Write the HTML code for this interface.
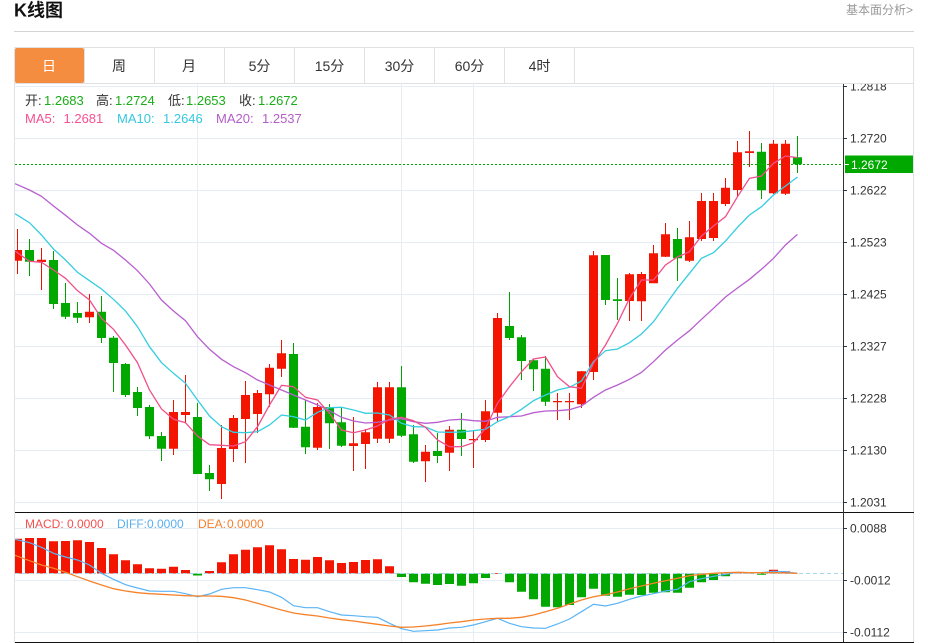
<!DOCTYPE html>
<html lang="zh">
<head>
<meta charset="utf-8">
<title>K线图</title>
<style>
html,body{margin:0;padding:0;background:#fff;width:928px;height:643px;overflow:hidden}
svg{display:block;font-family:"Liberation Sans","Noto Sans CJK SC",sans-serif}
</style>
</head>
<body>
<svg width="928" height="643" viewBox="0 0 928 643" xmlns="http://www.w3.org/2000/svg">
<defs><clipPath id="c"><rect x="15" y="84" width="828" height="558"/></clipPath>
<clipPath id="a"><rect x="843" y="84" width="70" height="558"/></clipPath></defs>

<!-- header -->
<text x="14" y="16.5" font-size="18" font-weight="700" fill="#111">K线图</text>
<text x="846" y="14" font-size="12" fill="#999">基本面分析&gt;</text>
<path d="M14 31.5H914" stroke="#d2d4d6" fill="none"/>

<!-- frame + tabs -->
<path d="M14.5 47V643M913.5 47V643M14 47.5H914M14 83.5H914" stroke="#dfe1e4" fill="none"/>
<path d="M84.5 48V83M154.5 48V83M224.5 48V83M294.5 48V83M364.5 48V83M434.5 48V83M504.5 48V83M574.5 48V83" stroke="#dfe1e4" fill="none"/>
<rect x="15" y="48" width="69" height="35" rx="2" fill="#f58d40"/>
<g font-size="14" fill="#333" text-anchor="middle">
<text x="49" y="71" fill="#fff">日</text>
<text x="119" y="71">周</text>
<text x="189" y="71">月</text>
<text x="259.500" y="71">5分</text>
<text x="329.500" y="71">15分</text>
<text x="399.500" y="71">30分</text>
<text x="469.500" y="71">60分</text>
<text x="539.500" y="71">4时</text>
</g>

<!-- grid -->
<g stroke="#e6edf4" fill="none">
<path d="M15 86.5H843M15 138.500H843M15 190.500H843M15 242.500H843M15 294.500H843M15 346.500H843M15 398.500H843M15 450.500H843M15 502.500H843M15 528.500H843M15 580.500H843M15 632.500H843"/>
<path d="M197.500 84V642M401.500 84V642M473.500 84V642M773.500 84V642"/>
</g>

<g clip-path="url(#c)" fill="none">
<!-- price line -->
<path d="M15 164.500H843" stroke="#00a800" stroke-dasharray="2 2"/>
<!-- wicks -->
<path stroke="#ee1000" stroke-width="1" d="M17.500 229V274M41.500 248V290M89.500 294V323M173.500 400V455M185.500 375V423M221.500 425V499M233.500 415V462M245.500 381V463M257.500 390V433M269.500 364V407M281.500 340V377M317.500 403V450M353.500 417V471M365.500 429V469M377.500 382V443M389.500 382V443M425.500 445V482M449.500 426V471M473.500 431V468M485.500 400V442M497.500 313V421M557.500 393V420M569.500 393V420M581.500 371V408M593.500 251V380M629.500 273V321M641.500 272V321M653.500 245V283M665.500 223V257M689.500 221V262M701.500 193V241M713.500 193V241M725.500 178V206M737.500 141V197M749.500 131V167M773.500 140V194M785.500 140V195"/>
<path stroke="#00a000" stroke-width="1" d="M29.500 239V276M53.500 251V309M65.500 283V319M77.500 302V323M101.500 296V343M113.500 336V392M125.500 363V397M137.500 387V416M149.500 405V439M161.500 432V461M197.500 403V474M209.500 465V491M293.500 343V428M305.500 400V454M329.500 404V449M341.500 408V447M401.500 366V437M413.500 425V463M437.500 433V463M461.500 413V456M509.500 292V340M521.500 335V380M533.500 359V391M545.500 356V406M605.500 255V305M617.500 278V320M677.500 228V281M761.500 143V199M797.500 136V173"/>
<!-- bodies -->
<path stroke="#f41500" stroke-width="9" d="M17.500 250V260.700M41.500 259.700V262M89.500 311.700V317.300M173.500 412V448.700M185.500 412V415M221.500 448V484M233.500 418V449M245.500 395V419M257.500 393V414M269.500 367.700V394.300M281.500 353.300V368.700M317.500 407V447.700M353.500 443.300V446M365.500 432.300V444M377.500 387.300V438.700M389.500 387.300V438.700M425.500 451.700V461.300M449.500 429.700V452.700M473.500 439V440.300M485.500 411.300V440M497.500 318V412.700M557.500 401V402.300M569.500 401V402.300M581.500 371.300V404.300M593.500 255.300V372M629.500 274.300V301M641.500 274V301.300M653.500 253.300V283.300M665.500 234.300V256.700M689.500 237.300V260.700M701.500 201V239M713.500 201V238M725.500 187.700V204M737.500 152.300V190M749.500 151.300V153M773.500 143.700V193.300M785.500 143.700V193.700"/>
<path stroke="#00a800" stroke-width="9" d="M29.500 250V261.700M53.500 260V304M65.500 303V316.700M77.500 313V317.700M101.500 311.700V338M113.500 337.700V363M125.500 364V395M137.500 392V408M149.500 407V436.300M161.500 436V448.700M197.500 417V474M209.500 473V479.300M293.500 354V427.700M305.500 426.700V447.300M329.500 407.300V423.300M341.500 422.300V445.700M401.500 387.300V435.700M413.500 434.300V461.700M437.500 451V456M461.500 429.700V439M509.500 326V338M521.500 337.300V361M533.500 360.300V369.300M545.500 368.700V401.700M605.500 255V300M617.500 299.300V301M677.500 239V258.300M761.500 151.700V190.300M797.500 157.300V164.300"/>
<!-- MA20 -->
<polyline stroke="#b85fcf" stroke-width="1.300" points="15,183.700 29.500,190 41.500,196.300 53.500,206 65.500,215.300 77.500,225 89.500,233.300 101.500,243.300 113.500,250.300 125.500,260 137.500,270.700 149.500,284 161.500,300 173.500,311 185.500,320.700 197.500,336.700 209.500,349.300 221.500,359.300 233.500,366.700 245.500,372.700 257.500,380 269.500,385 281.500,390 293.500,395 305.500,400 317.500,405 329.500,410.700 341.500,417.300 353.500,421 365.500,423 377.500,422.300 389.500,420 401.500,418.700 413.500,421.700 425.500,423.300 437.500,422.300 449.500,420 461.500,419.300 473.500,420.700 485.500,421.300 497.500,417.300 509.500,416.700 521.500,416 533.500,412.700 545.500,411 557.500,410.700 569.500,409.700 581.500,406 593.500,397.300 605.500,390 617.500,385 629.500,379.300 641.500,372.300 653.500,361.700 665.500,350 677.500,340 689.500,330.700 701.500,319.300 713.500,308.300 725.500,297 737.500,288 749.500,279.300 761.500,269.300 773.500,258.300 785.500,245 797.500,234.300"/>
<!-- MA10 -->
<polyline stroke="#35cde0" stroke-width="1.300" points="15,213.700 29.500,222.700 41.500,235 53.500,249 65.500,260 77.500,272.300 89.500,280.700 101.500,289 113.500,299.300 125.500,311 137.500,326.700 149.500,346.700 161.500,362.700 173.500,373.300 185.500,383.300 197.500,400 209.500,416 221.500,426.700 233.500,432.300 245.500,432.700 257.500,431.700 269.500,425 281.500,415 293.500,416.700 305.500,420 317.500,412.300 329.500,407.700 341.500,407.300 353.500,410 365.500,413.300 377.500,413 389.500,415 401.500,423.300 413.500,426.700 425.500,427 437.500,432 449.500,432.300 461.500,432 473.500,430.700 485.500,429.300 497.500,421.700 509.500,416.700 521.500,409.300 533.500,400.700 545.500,395 557.500,390 569.500,387.300 581.500,381 593.500,361.700 605.500,350.700 617.500,349 629.500,342.700 641.500,334 653.500,321.700 665.500,305 677.500,288.300 689.500,273.300 701.500,258.300 713.500,252.700 725.500,241 737.500,227.300 749.500,215 761.500,206.700 773.500,195 785.500,186 797.500,177"/>
<!-- MA5 -->
<polyline stroke="#f0508c" stroke-width="1.300" points="15,251 29.500,261.300 41.500,262.300 53.500,270 65.500,278.300 77.500,290.700 89.500,300 101.500,318.300 113.500,329.300 125.500,345 137.500,362.700 149.500,390 161.500,409 173.500,419.300 185.500,422.700 197.500,436 209.500,444.700 221.500,445.300 233.500,446 245.500,441.700 257.500,426.700 269.500,405 281.500,385.300 293.500,386.700 305.500,397.300 317.500,400 329.500,413.300 341.500,430 353.500,432.700 365.500,430 377.500,426 389.500,419.300 401.500,417.300 413.500,420.700 425.500,427.300 437.500,440 449.500,446.700 461.500,446.700 473.500,442.700 485.500,428.300 497.500,403.300 509.500,386.700 521.500,371.700 533.500,359 545.500,357 557.500,376.700 569.500,386.700 581.500,388.300 593.500,363.300 605.500,345 617.500,323.300 629.500,298.300 641.500,280 653.500,280 665.500,265 677.500,257 689.500,251.700 701.500,236 713.500,226 725.500,216.700 737.500,196.700 749.500,178.300 761.500,176 773.500,163.300 785.500,156 797.500,157.700"/>

<!-- MACD bars -->
<path stroke="#f41500" stroke-width="9" d="M17.500 538.700V573.500M29.500 538V573.500M41.500 538V573.500M53.500 541.300V573.500M65.500 541V573.500M77.500 540.300V573.500M89.500 542V573.500M101.500 548V573.500M113.500 554.300V573.500M125.500 560.300V573.500M137.500 564.300V573.500M149.500 568.300V573.500M161.500 568.700V573.500M173.500 566.700V573.500M185.500 570V573.500M209.500 571V573.500M221.500 562.300V573.500M233.500 554.300V573.500M245.500 549.700V573.500M257.500 547.300V573.500M269.500 545.300V573.500M281.500 549.300V573.500M293.500 559V573.500M305.500 559.700V573.500M317.500 557V573.500M329.500 560.300V573.500M341.500 563V573.500M353.500 562V573.500M365.500 560V573.500M377.500 559.300V573.500M389.500 566.300V573.500M497.500 573V573.800M737.500 572.500V573.500M749.500 573V573.500M773.500 569.700V573.500M785.500 571.300V573.500"/>
<path stroke="#00a800" stroke-width="9" d="M197.500 573.500V575.500M401.500 573.500V577M413.500 573.500V582.300M425.500 573.500V583.700M437.500 573.500V585M449.500 573.500V584M461.500 573.500V585.700M473.500 573.500V583.300M485.500 573.500V578M509.500 573.500V582.300M521.500 573.500V591.700M533.500 573.500V599.300M545.500 573.500V606.700M557.500 573.500V607.300M569.500 573.500V605M581.500 573.500V597.300M593.500 573.500V588.700M605.500 573.500V595.700M617.500 573.500V596.700M629.500 573.500V594.700M641.500 573.500V595M653.500 573.500V592.700M665.500 573.500V592.300M677.500 573.500V592.700M689.500 573.500V587.700M701.500 573.500V582.300M713.500 573.500V580M725.500 573.500V576.300M761.500 573.500V574.700"/>
<path d="M15 573.500H843" stroke="#a5d8ea" stroke-dasharray="4 3"/>
<!-- DIFF -->
<polyline stroke="#5ab4f5" stroke-width="1.200" points="15,539.300 29.500,542.700 41.500,547.300 53.500,553.300 65.500,557 77.500,560 89.500,565 101.500,573.300 113.500,579.300 125.500,584.700 137.500,588 149.500,591 161.500,591.300 173.500,591.300 185.500,593.700 197.500,596.700 209.500,594 221.500,589.300 233.500,587.700 245.500,587.700 257.500,589.700 269.500,592 281.500,597.300 293.500,605.700 305.500,607.700 317.500,607.700 329.500,611.700 341.500,615 353.500,615.700 365.500,616.700 377.500,617.300 389.500,623.300 401.500,628.700 413.500,631.300 425.500,630.700 437.500,630 449.500,628 461.500,627.300 473.500,625 485.500,621.700 497.500,618.300 509.500,623.300 521.500,626.700 533.500,628 545.500,628.300 557.500,624 569.500,619 581.500,611.700 593.500,604.300 605.500,606 617.500,603.300 629.500,599.300 641.500,596 653.500,593.700 665.500,591 677.500,589.300 689.500,581.700 701.500,578.700 713.500,576.300 725.500,574.300 737.500,572.300 749.500,572.700 761.500,572.700 773.500,571.300 785.500,571.700 797.500,573.300"/>
<!-- DEA -->
<polyline stroke="#f5822a" stroke-width="1.300" points="15,555.300 29.500,560.700 41.500,565 53.500,568.300 65.500,572.300 77.500,576.700 89.500,581 101.500,585 113.500,588.700 125.500,591 137.500,592.700 149.500,593.700 161.500,594.300 173.500,595 185.500,595.700 197.500,596 209.500,596 221.500,596.300 233.500,597.700 245.500,600 257.500,603.300 269.500,606.700 281.500,610 293.500,613 305.500,614.700 317.500,616 329.500,618 341.500,619.700 353.500,621 365.500,622.700 377.500,624.300 389.500,626 401.500,627.300 413.500,627 425.500,626 437.500,624.700 449.500,623 461.500,621.700 473.500,620 485.500,619 497.500,618.300 509.500,618.300 521.500,617.300 533.500,615 545.500,611.700 557.500,608.300 569.500,604 581.500,600 593.500,596.700 605.500,594.700 617.500,592 629.500,588.700 641.500,586 653.500,583.300 665.500,580.700 677.500,578.300 689.500,575.700 701.500,574.300 713.500,573.300 725.500,572.700 737.500,572.300 749.500,572.700 761.500,572.700 773.500,572.700 785.500,573 797.500,573.300"/>
</g>

<!-- separators & axis -->
<path d="M15 512.500H914M15 642.500H914" stroke="#111" fill="none"/>
<path d="M843.500 84V642" stroke="#333" fill="none"/>
<path d="M843 86.500H847M843 138.500H847M843 190.500H847M843 242.500H847M843 294.500H847M843 346.500H847M843 398.500H847M843 450.500H847M843 502.500H847M843 528.500H847M843 580.500H847M843 632.500H847" stroke="#333" fill="none"/>

<!-- axis labels -->
<g font-size="12" fill="#333">
<g clip-path="url(#a)"><text x="850" y="90.700">1.2818</text></g>
<text x="850" y="142.700">1.2720</text>
<text x="850" y="194.700">1.2622</text>
<text x="850" y="246.700">1.2523</text>
<text x="850" y="298.700">1.2425</text>
<text x="850" y="350.700">1.2327</text>
<text x="850" y="402.700">1.2228</text>
<text x="850" y="454.700">1.2130</text>
<text x="850" y="506.700">1.2031</text>
<text x="850" y="532.700">0.0088</text>
<text x="850" y="584.700">-0.0012</text>
<text x="850" y="636.700">-0.0112</text>
</g>
<rect x="845" y="155.500" width="68" height="17.500" fill="#00a800"/>
<path d="M845 164.500H849" stroke="#fff" fill="none"/>
<text x="851" y="168.800" font-size="12" fill="#fff">1.2672</text>

<!-- legends -->
<g font-size="13">
<g fill="#333"><text x="25" y="105">开:</text><text x="96" y="105">高:</text><text x="168" y="105">低:</text><text x="239" y="105">收:</text></g>
<g fill="#1aad19"><text x="44" y="105">1.2683</text><text x="115" y="105">1.2724</text><text x="186" y="105">1.2653</text><text x="258" y="105">1.2672</text></g>
<g fill="#f5508f"><text x="25" y="123">MA5:</text><text x="63.500" y="123">1.2681</text></g>
<g fill="#35c8e0"><text x="117" y="123">MA10:</text><text x="163" y="123">1.2646</text></g>
<g fill="#b45ec8"><text x="216" y="123">MA20:</text><text x="262" y="123">1.2537</text></g>
</g>
<g font-size="12">
<g fill="#f45050"><text x="25" y="528">MACD:</text><text x="67" y="528">0.0000</text></g>
<g fill="#5ab0f0"><text x="117" y="528">DIFF:</text><text x="147" y="528">0.0000</text></g>
<g fill="#f58030"><text x="198" y="528">DEA:</text><text x="227" y="528">0.0000</text></g>
</g>
</svg>
</body>
</html>
